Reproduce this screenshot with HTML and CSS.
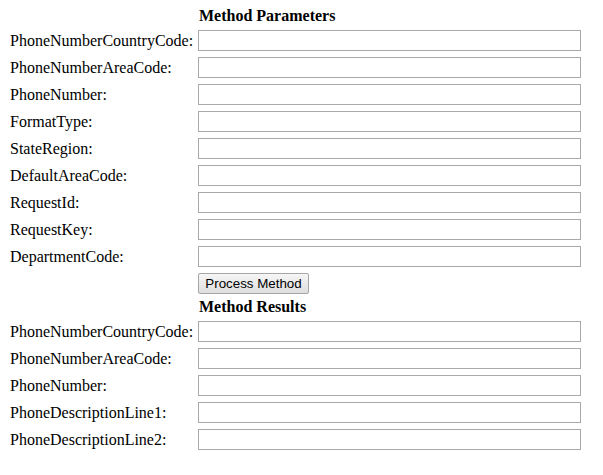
FILE: index.html
```html
<!DOCTYPE html>
<html>
<head>
<meta charset="utf-8">
<link rel="stylesheet" href="styles.css">
</head>
<body>
<form class="form">
  <div></div><div class="heading">Method Parameters</div>
  <label class="label">PhoneNumberCountryCode:</label><input class="field" type="text">
  <label class="label">PhoneNumberAreaCode:</label><input class="field" type="text">
  <label class="label">PhoneNumber:</label><input class="field" type="text">
  <label class="label">FormatType:</label><input class="field" type="text">
  <label class="label">StateRegion:</label><input class="field" type="text">
  <label class="label">DefaultAreaCode:</label><input class="field" type="text">
  <label class="label">RequestId:</label><input class="field" type="text">
  <label class="label">RequestKey:</label><input class="field" type="text">
  <label class="label">DepartmentCode:</label><input class="field" type="text">
  <div></div><div class="btn-cell"><button class="btn" type="button">Process Method</button></div>
  <div></div><div class="heading">Method Results</div>
  <label class="label">PhoneNumberCountryCode:</label><input class="field" type="text">
  <label class="label">PhoneNumberAreaCode:</label><input class="field" type="text">
  <label class="label">PhoneNumber:</label><input class="field" type="text">
  <label class="label">PhoneDescriptionLine1:</label><input class="field" type="text">
  <label class="label">PhoneDescriptionLine2:</label><input class="field" type="text">
</form>
</body>
</html>
```
FILE: styles.css
```css
html, body {
  margin: 0;
  background: #fff;
}
body {
  padding: 7px 0 0 10px;
  font-family: "Liberation Serif", "Times New Roman", serif;
  font-size: 16px;
  color: #000;
}
.form {
  display: grid;
  grid-template-columns: 188px 383px;
  row-gap: 5px;
  align-items: center;
}
.heading {
  font-weight: bold;
  line-height: 18px;
  height: 18px;
  padding-left: 1px;
}
.label {
  line-height: 22px;
  white-space: nowrap;
}
.field {
  box-sizing: border-box;
  width: 383px;
  height: 21px;
  margin: 0 0 1px 0;
  border: 1px solid #a9a9a9;
  padding: 1px 2px;
  font: 13.33px "Liberation Sans", Arial, sans-serif;
  background: #fff;
  outline: none;
}
.btn-cell {
  height: 20px;
}
.btn {
  box-sizing: border-box;
  height: 21px;
  width: 111px;
  margin: 0;
  padding: 0 6px;
  border: 1px solid #a6a6a6;
  border-radius: 2px;
  background: linear-gradient(#f6f6f6, #dedede);
  font: 13.33px "Liberation Sans", Arial, sans-serif;
  color: #000;
  vertical-align: top;
}
```
